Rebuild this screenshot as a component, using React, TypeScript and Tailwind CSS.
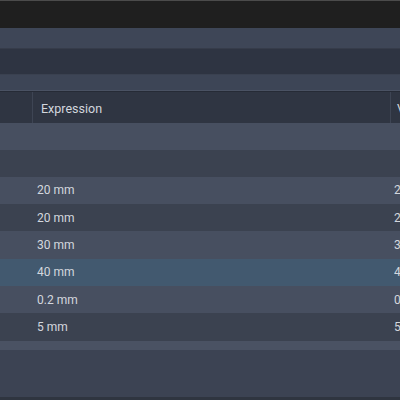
const rows = [
  { expr: "20 mm", value: "20 mm", shade: "light" },
  { expr: "20 mm", value: "20 mm", shade: "dark" },
  { expr: "30 mm", value: "30 mm", shade: "light" },
  { expr: "40 mm", value: "40 mm", shade: "selected" },
  { expr: "0.2 mm", value: "0.2 mm", shade: "light" },
  { expr: "5 mm", value: "5 mm", shade: "dark" },
];

const shadeClass: Record<string, string> = {
  light: "bg-[#474f60]",
  dark: "bg-[#3b4250]",
  selected: "bg-[#42596f]",
};

export default function App() {
  return (
    <div
      className="w-[400px] h-[400px] overflow-hidden flex flex-col bg-[#3c4353] text-[#d3d7de]"
      style={{ fontFamily: 'Roboto, "Noto Sans", sans-serif' }}
    >
      {/* title strip */}
      <div className="h-px bg-[#4b4b4b]" />
      <div className="h-[27px] bg-[#1f1f1f]" />

      {/* toolbar bands */}
      <div className="h-[21px] bg-[#3e4657] border-b border-[#363c4a]" />
      <div className="h-[26px] bg-[#2e3442] border-b border-[#3a4150]" />
      <div className="h-[16px] bg-[#3d4556] border-b border-[#4a5263]" />

      {/* table header */}
      <div className="h-[32px] flex bg-[#2f3542] border-t border-[#262b36] text-[12.5px]">
        <div className="w-[33px] border-r border-[#3e4554]" />
        <div className="flex-1 flex items-center pl-2 pt-[3px] border-r border-[#3e4554]">Expression</div>
        <div className="w-[9px] flex items-center pl-[6px] pt-[3px] overflow-hidden whitespace-nowrap">Value</div>
      </div>

      {/* group rows */}
      <div className="h-[26.5px] bg-[#474f60]" />
      <div className="h-[27px] bg-[#3b4250]" />

      {/* parameter rows */}
      {rows.map((r, i) => (
        <div key={i} className={`h-[27.4px] flex items-center text-[12px] ${shadeClass[r.shade]}`}>
          <div className="w-[37px]" />
          <div className="flex-1">{r.expr}</div>
          <div className="w-[6px] overflow-hidden whitespace-nowrap">{r.value}</div>
        </div>
      ))}

      <div className="h-[9px] bg-[#4a5263]" />
      <div className="flex-1 bg-[#3c4353]" />
      <div className="h-[3px] bg-[#2f3540]" />
    </div>
  );
}
